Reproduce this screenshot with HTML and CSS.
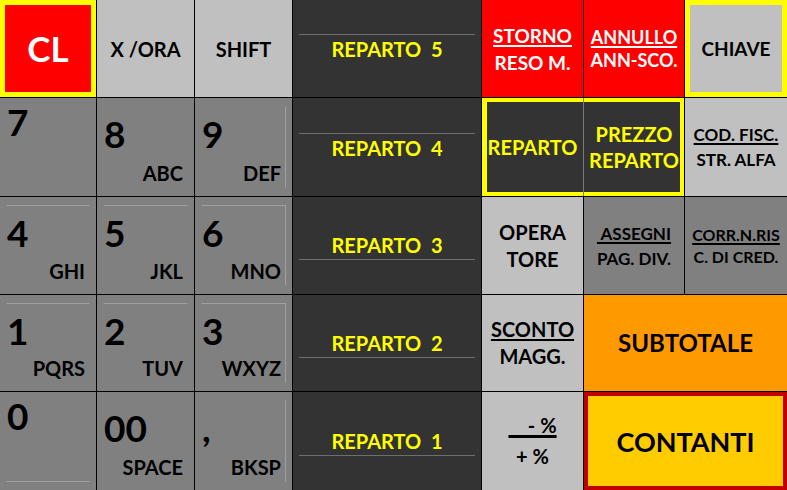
FILE: index.html
```html
<!DOCTYPE html>
<html lang="it">
<head>
  <meta charset="UTF-8">
  <title>Tastiera Cassa</title>
  <link rel="stylesheet" href="styles.css">
</head>
<body>

  <div class="pad">
    <!-- riga 1 -->
    <div class="key red cl ybox">CL</div>
    <div class="key light">X /ORA</div>
    <div class="key light">SHIFT</div>
    <div class="key dark rep"><span class="lbl top">REPARTO&nbsp;&nbsp;5</span></div>
    <div class="key red two lh-27 f19"><span class="u">STORNO</span><span>RESO M.</span></div>
    <div class="key red two lh-23 f18"><span class="u">ANNULLO</span><span>ANN-SCO.</span></div>
    <div class="key light ybox f19">CHIAVE</div>

    <!-- riga 2 -->
    <div class="key mid num solo"><div class="face"><span class="d">7</span></div></div>
    <div class="key mid num"><div class="face"><span class="d">8</span><span class="abc">ABC</span></div></div>
    <div class="key mid num"><div class="face lr"><span class="d">9</span><span class="abc">DEF</span></div></div>
    <div class="key dark rep"><span class="lbl top">REPARTO&nbsp;&nbsp;4</span></div>
    <div class="key dark yl">REPARTO</div>
    <div class="key dark two lh-26 yr"><span>PREZZO</span><span>REPARTO</span></div>
    <div class="key light two lh-25 small"><span class="u">COD. FISC.</span><span>STR. ALFA</span></div>

    <!-- riga 3 -->
    <div class="key mid num"><div class="face lt"><span class="d">4</span><span class="abc">GHI</span></div></div>
    <div class="key mid num"><div class="face lt"><span class="d">5</span><span class="abc">JKL</span></div></div>
    <div class="key mid num"><div class="face lt lr"><span class="d">6</span><span class="abc">MNO</span></div></div>
    <div class="key dark rep"><span class="lbl bottom">REPARTO&nbsp;&nbsp;3</span></div>
    <div class="key light two lh-27"><span>OPERA</span><span>TORE</span></div>
    <div class="key mid two lh-25 small"><span class="u">&nbsp;ASSEGNI</span><span>PAG. DIV.</span></div>
    <div class="key mid two lh-22 smaller"><span class="u">CORR.N.RIS</span><span>C. DI CRED.</span></div>

    <!-- riga 4 -->
    <div class="key mid num"><div class="face lt"><span class="d">1</span><span class="abc">PQRS</span></div></div>
    <div class="key mid num"><div class="face lt"><span class="d">2</span><span class="abc">TUV</span></div></div>
    <div class="key mid num"><div class="face lt lr"><span class="d">3</span><span class="abc">WXYZ</span></div></div>
    <div class="key dark rep"><span class="lbl bottom">REPARTO&nbsp;&nbsp;2</span></div>
    <div class="key light two lh-27"><span class="u">SCONTO</span><span>MAGG.</span></div>
    <div class="key orange wide subtot">SUBTOTALE</div>

    <!-- riga 5 -->
    <div class="key mid num solo"><div class="face lb"><span class="d">0</span></div></div>
    <div class="key mid num"><div class="face"><span class="d">00</span><span class="abc">SPACE</span></div></div>
    <div class="key mid num"><div class="face lr"><span class="d">,</span><span class="abc">BKSP</span></div></div>
    <div class="key dark rep"><span class="lbl bottom">REPARTO&nbsp;&nbsp;1</span></div>
    <div class="key light two lh-31"><span class="u thick">&nbsp;&nbsp;&nbsp;&nbsp;- %</span><span>+ %</span></div>
    <div class="key gold wide contanti">CONTANTI</div>
  </div>

</body>
</html>
```

FILE: styles.css
```css
body {
  margin: 0;
  background-color: #000;
  font-family: Lato, "Open Sans", sans-serif;
}

.pad {
  display: grid;
  grid-template-columns: 96px 97px 97px 188px 101px 100px 102px;
  grid-template-rows: 97px 98px 97px 96px 98px;
  gap: 1px;
  width: 787px;
  height: 490px;
  background-color: #000;
}

.key {
  display: flex;
  flex-direction: column;
  align-items: center;
  justify-content: center;
  font-size: 20px;
  font-weight: 700;
  line-height: 1;
  text-align: center;
  color: #000;
  white-space: nowrap;
}

/* colori */
.light { background-color: #c0c0c0; }
.mid { background-color: #808080; }
.dark { background-color: #333333; color: #ffff00; }
.red { background-color: #ff0000; color: #fff; }
.orange { background-color: #ff9900; }
.gold { background-color: #ffcc00; }

.wide { grid-column: span 2; }

.ybox { box-shadow: inset 0 0 0 5px #ffff00; }
.yl { box-shadow: inset 5px 0 0 #ffff00, inset 0 4px 0 #ffff00, inset 0 -4px 0 #ffff00, 1px 0 0 #7a7a7a; }
.yr { box-shadow: inset -4px 0 0 #ffff00, inset 0 4px 0 #ffff00, inset 0 -4px 0 #ffff00; }

.cl { font-size: 35px; }

.subtot { font-size: 24px; }

.contanti {
  font-size: 27px;
  box-shadow: inset 0 0 0 4px #c00000;
}

.f18 { font-size: 18px; }
.f19 { font-size: 19px; }

/* tasti reparto */
.rep { align-items: stretch; }

.rep .lbl {
  margin: 0 6px;
  padding: 4px 0;
}

.lbl.top { border-top: 1px solid #6e6e6e; }
.lbl.bottom { border-bottom: 1px solid #6e6e6e; }

/* tasti a due righe */
.two span { display: block; }
.lh-22 span { line-height: 22px; }
.lh-23 span { line-height: 23px; }
.lh-25 span { line-height: 25px; }
.lh-26 span { line-height: 26px; }
.lh-27 span { line-height: 27px; }
.lh-31 span { line-height: 31px; }

.small { font-size: 17px; }
.smaller { font-size: 16px; }

.u {
  text-decoration: underline;
  text-decoration-thickness: 2px;
  text-underline-offset: 2px;
}

.u.thick { text-decoration-thickness: 3px; }

/* tastierino numerico */
.num {
  align-items: stretch;
  padding: 8px 6px;
}

.face {
  flex: 1;
  display: flex;
  flex-direction: column;
  justify-content: space-between;
  padding: 0 4px 4px 0;
  border: 1px solid transparent;
}

.face.lt { border-top-color: #a0a0a0; }
.face.lr { border-right-color: #a0a0a0; }
.face.lb { border-bottom-color: #a0a0a0; }

.d {
  margin-top: 8px;
  font-size: 37px;
  text-align: left;
}

.solo .d { margin-top: -4px; }

.abc {
  font-size: 20px;
  text-align: right;
}
```
